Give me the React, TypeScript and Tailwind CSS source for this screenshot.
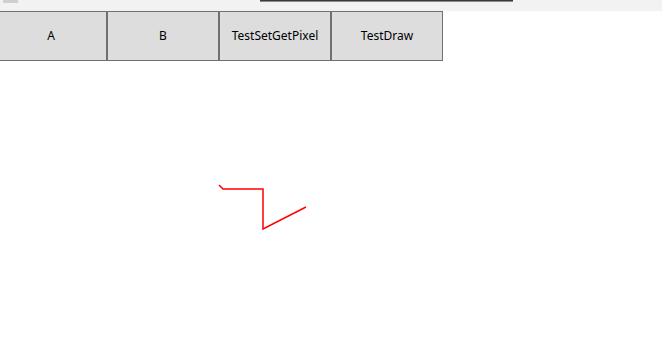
import React from 'react';

const BUTTONS = ['A', 'B', 'TestSetGetPixel', 'TestDraw'];

export default function App() {
  return (
    <div className="w-[662px] h-[361px] bg-white overflow-hidden relative" style={{ fontFamily: '"Noto Sans", "Open Sans", sans-serif' }}>
      <div className="h-[11px] bg-[#f2f2f2] relative">
        <div className="absolute left-[3px] top-0 w-[15px] h-[3px] bg-[#cfcfcf]" />
        <div className="absolute left-[260px] top-0 w-[253px] h-[2px] bg-[#3a3a3a] border-b border-[#8a8a8a]" />
      </div>
      <div className="flex ml-[-5px]">
        {BUTTONS.map(b => (
          <div
            key={b}
            className="w-[112px] h-[50px] bg-[#dddddd] border border-[#707070] flex items-center justify-center text-[12px] text-black"
          >
            {b}
          </div>
        ))}
      </div>
      <svg className="absolute left-0 top-0" width="662" height="361">
        <polyline
          points="219,185 223,189 263,189 263,229 306,207"
          fill="none"
          stroke="#ff0000"
          strokeWidth="1.5"
        />
      </svg>
    </div>
  );
}
